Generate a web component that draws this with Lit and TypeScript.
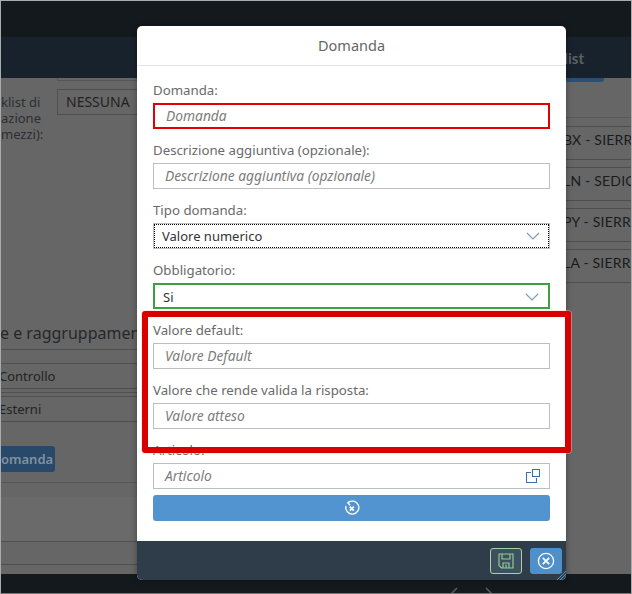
import { LitElement, html, css } from "lit";
import { customElement } from "lit/decorators.js";

const chevron = html`<svg class="chev" width="14" height="8" viewBox="0 0 14 8"><path d="M1 1l6 6 6-6" fill="none" stroke="#7a9bb8" stroke-width="1.1"/></svg>`;

@customElement("app-root")
export class AppRoot extends LitElement {
  static styles = css`
    :host { display: block; width: 632px; height: 594px; overflow: hidden; font-family: "Noto Sans", "Open Sans", sans-serif; }
    * { box-sizing: border-box; }
    .page { position: relative; width: 632px; height: 594px; display: flex; flex-direction: column; background: #666; border: 1px solid #a9acae; border-bottom-color: #777; overflow: hidden; }
    .top { height: 36px; background: #14191d; flex: none; }
    .nav { height: 41px; background: #18222c; flex: none; display: flex; justify-content: flex-end; align-items: center; padding-right: 47px; color: #5b6066; font: 700 15px "Lato", sans-serif; }
    .content { flex: 1; display: flex; min-height: 0; color: #1f2225; }
    .left { width: 136px; flex: none; overflow: hidden; display: flex; flex-direction: column; }
    .mid { width: 429px; flex: none; }
    .right { flex: 1; display: flex; flex-direction: column; overflow: hidden; white-space: nowrap; font: 14px "Lato", sans-serif; letter-spacing: .2px; color: #191b1d; }
    .bottom { height: 19px; flex: none; background: #14191d; position: relative; }
    .stub { margin-left: 56px; height: 3px; border: 1px solid #555; border-top: 0; flex: none; }
    .nessuna { display: flex; height: 55px; margin-top: 8px; flex: none; }
    .klabel { width: 56px; flex: none; padding-top: 5px; font-size: 13px; line-height: 16px; color: #2c2f32; white-space: nowrap; }
    .ninput { height: 26px; flex: 1; border: 1px solid #4f4f4f; padding: 0 8px; font-size: 14px; line-height: 24px; color: #222; white-space: nowrap; }
    .heading { margin: 176px 0 0 -1px; height: 26px; flex: none; font-size: 16px; line-height: 26px; color: #25282b; white-space: nowrap; }
    .lines { margin-top: 3px; height: 15px; flex: none; border-top: 1px solid #505050; border-bottom: 1px solid #505050; }
    .row { height: 25px; flex: none; border-bottom: 1px solid #4d4d4d; font-size: 13px; line-height: 24px; text-indent: -2px; color: #222; white-space: nowrap; }
    .gap { height: 4px; flex: none; border-bottom: 1px solid #505050; }
    .bar { margin-top: 24px; width: 54px; height: 26px; flex: none; background: #28496a; border-radius: 0 3px 3px 0; color: #80919f; font-size: 13px; font-weight: 600; line-height: 26px; text-align: right; padding-right: 8px; overflow: hidden; }
    .sep { height: 1px; flex: none; background: #555; margin-top: 10px; }
    .band { height: 45px; flex: none; margin-top: 14px; background: #6a6a6a; border-bottom: 1px solid #4f4f4f; }
    .band2 { height: 23px; flex: none; border-bottom: 1px solid #4f4f4f; }
    .rbar { height: 4px; width: 38px; background: #2a4f76; border-radius: 0 0 3px 0; flex: none; }
    .rgap { height: 36px; flex: none; border-bottom: 1px solid #585858; }
    .rrow { height: 34px; line-height: 26px; flex: none; text-indent: -3px; border-top: 1px solid #4f4f4f; border-bottom: 1px solid #4f4f4f; margin-bottom: 7px; }
    .rgap + .rrow { margin-top: 8px; }

    .modal { position: absolute; left: 136px; top: 25px; width: 429px; height: 554px; background: #fff; border-radius: 5px; display: flex; flex-direction: column; overflow: hidden; box-shadow: 0 0 6px rgba(0,0,0,.35); }
    .mhead { height: 40px; flex: none; border-bottom: 1px solid #e5e5e5; text-align: center; color: #666; font-size: 14.5px; line-height: 39px; }
    .form { flex: 1; padding: 14px 16px 0; display: flex; flex-direction: column; }
    .field { height: 60px; display: flex; flex-direction: column; flex: none; }
    .label { height: 23px; flex: none; font-size: 13.25px; line-height: 20px; color: #6a6a6a; white-space: nowrap; }
    .input { height: 26px; flex: none; border: 1px solid #bdbdbd; display: flex; align-items: center; justify-content: space-between; padding: 0 11px 1px; font-size: 13.8px; font-style: italic; color: #7d7d7d; position: relative; white-space: nowrap; }
    .input.red { border: 2px solid #e30000; padding: 0 11px 1px; }
    .select { font-size: 13px; font-style: normal; color: #333; padding: 0 9px 0 8px; }
    .select.focus::after { content: ""; position: absolute; inset: 0; border: 1px dotted #000; }
    .select.ok { border: 2px solid #3f9e3f; padding: 1px 9px 0 8px; }
    .artfield { flex: none; display: flex; flex-direction: column; }
    .copy { margin-right: -2px; }
    .reset { height: 26px; flex: none; margin-top: 6px; background: #5294cf; border: 0; border-radius: 3px; display: flex; align-items: center; justify-content: center; padding: 0; }
    .mfoot { height: 39px; flex: none; background: #2f3d4b; display: flex; justify-content: flex-end; align-items: flex-start; gap: 8px; padding: 7px 4px 0 0; position: relative; }
    .fbtn { width: 32px; height: 26px; border-radius: 3px; display: flex; align-items: center; justify-content: center; padding: 0; }
    .save { background: #3d4f60; border: 1px solid #a4d6a4; }
    .close { background: #4f8fca; border: 0; }
    .grip { position: absolute; right: 0; bottom: 0; }
    .hl { position: absolute; left: 141px; top: 310px; width: 429px; height: 142px; border: 6px solid #d90000; border-radius: 3px; pointer-events: none; box-shadow: 0 0 0 1px rgba(255,200,200,.4); }
    .chevrons { position: absolute; left: 449px; top: 13px; }
  `;

  field(label: string, ph: string, red = false) {
    return html`<div class="field"><div class="label">${label}</div><div class="input ${red ? "red" : ""}">${ph}</div></div>`;
  }

  render() {
    return html`<div class="page">
      <div class="top"></div>
      <div class="nav">list</div>
      <div class="content">
        <div class="left">
          <div class="stub"></div>
          <div class="nessuna">
            <div class="klabel">klist di<br />azione<br />mezzi):</div>
            <div class="ninput">NESSUNA</div>
          </div>
          <div class="heading">e e raggruppamento</div>
          <div class="lines"></div>
          <div class="row">Controllo</div>
          <div class="gap"></div><div class="gap"></div>
          <div class="row">Esterni</div>
          <div class="bar">omanda</div>
          <div class="sep"></div>
          <div class="band"></div>
          <div class="band2"></div>
        </div>
        <div class="mid"></div>
        <div class="right">
          <div class="rbar"></div>
          <div class="rgap"></div>
          <div class="rrow">BX - SIERRA</div>
          <div class="rrow">LN - SEDICI</div>
          <div class="rrow">PY - SIERRA</div>
          <div class="rrow">LA - SIERRA</div>
        </div>
      </div>
      <div class="bottom">
        <svg class="chevrons" width="50" height="10" viewBox="0 0 50 10"><path d="M1 7l6-6M36 1l6 6" fill="none" stroke="#555c62" stroke-width="1.5"/></svg>
      </div>

      <div class="modal">
        <div class="mhead">Domanda</div>
        <div class="form">
          ${this.field("Domanda:", "Domanda", true)}
          ${this.field("Descrizione aggiuntiva (opzionale):", "Descrizione aggiuntiva (opzionale)")}
          <div class="field"><div class="label">Tipo domanda:</div><div class="input select focus">Valore numerico ${chevron}</div></div>
          <div class="field"><div class="label">Obbligatorio:</div><div class="input select ok">Si ${chevron}</div></div>
          ${this.field("Valore default:", "Valore Default")}
          ${this.field("Valore che rende valida la risposta:", "Valore atteso")}
          <div class="artfield">
            <div class="label">Articolo:</div>
            <div class="input">Articolo
              <svg class="copy" width="14" height="14" viewBox="0 0 14 14" fill="none" stroke="#3f6f9f" stroke-width="1.1"><path d="M5 3.5H.5v10h10V9"/><rect x="6.5" y=".5" width="7" height="7"/></svg>
            </div>
          </div>
          <button class="reset" aria-label="Ripristina">
            <svg width="16" height="17" viewBox="0 0 16 17" fill="none" stroke="#fff" stroke-width="1.3"><path d="M4 2.7A6.5 6.5 0 1 1 2 6"/><path d="M6.5 1L3.7 2.8l2.4 2.4"/><path d="M5.8 6.7l4 4M9.8 6.7l-4 4" stroke-width="1.7"/></svg>
          </button>
        </div>
        <div class="mfoot">
          <button class="fbtn save" aria-label="Salva">
            <svg width="16" height="16" viewBox="0 0 16 16" fill="none" stroke="#8fce8f" stroke-width="1.2"><path d="M1 1h14v14H3.5L1 12.5z"/><path d="M4 1v5h8V1M5 15v-5h6v5M8 11.5V15"/></svg>
          </button>
          <button class="fbtn close" aria-label="Chiudi">
            <svg width="18" height="18" viewBox="0 0 18 18" fill="none" stroke="#fff"><circle cx="9" cy="9" r="7.6" stroke-width="1.3"/><path d="M5.8 5.8l6.4 6.4M12.2 5.8l-6.4 6.4" stroke-width="1.8"/></svg>
          </button>
          <svg class="grip" width="9" height="9" viewBox="0 0 9 9" stroke="#5a94c8" stroke-width="1"><path d="M0 9l9-9M3 9l6-6M6 9l3-3"/></svg>
        </div>
      </div>
      <div class="hl"></div>
    </div>`;
  }
}
